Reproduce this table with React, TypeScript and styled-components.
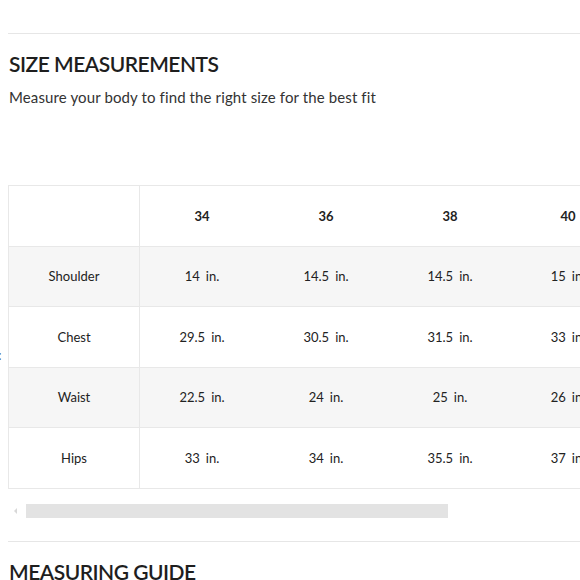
import React from "react";
import styled, { createGlobalStyle } from "styled-components";

const Global = createGlobalStyle`
  html, body { margin: 0; padding: 0; background: #fff; }
  body { font-family: "Lato", "Noto Sans", sans-serif; color: #222; overflow: hidden; }
`;

const Page = styled.div`
  width: 580px;
  height: 580px;
  overflow: hidden;
  position: relative;
  padding: 33px 0 0 8px;
  box-sizing: border-box;
`;

const Divider = styled.div`
  height: 1px;
  background: #e6e6e6;
  margin-right: -8px;
`;

const Heading = styled.h2`
  margin: 17px 0 0 1px;
  font-size: 21px;
  line-height: 26px;
  font-weight: 600;
  color: #1e1e1e;
  letter-spacing: -0.5px;
`;

const Sub = styled.p`
  margin: 10px 0 0 1px;
  font-size: 15px;
  line-height: 20px;
  color: #333;
  letter-spacing: 0.12px;
`;

const TableWrap = styled.div`
  margin-top: 78px;
  width: 640px;
`;

const Table = styled.table`
  border-collapse: collapse;
  table-layout: fixed;
  font-size: 13px;
  color: #222;
  border: 1px solid #e8e8e8;
`;

const Row = styled.tr<{ $shade?: boolean }>`
  background: ${(p) => (p.$shade ? "#f6f6f6" : "#fff")};
  height: 60.5px;
  border-top: 1px solid #e8e8e8;
`;

const Cell = styled.td<{ $w?: number; $head?: boolean; $first?: boolean }>`
  width: ${(p) => p.$w ?? 124}px;
  border-right: ${(p) => (p.$first ? "1px solid #e8e8e8" : "none")};
  text-align: center;
  padding: 0;
  font-weight: ${(p) => (p.$head ? 700 : 400)};
  white-space: nowrap;
`;

const Unit = styled.span`
  margin-left: 6px;
`;

const ScrollRow = styled.div`
  display: flex;
  align-items: center;
  height: 14px;
  margin-top: 15px;
  padding-left: 6px;
  gap: 9px;
`;

const Arrow = styled.span`
  width: 0;
  height: 0;
  border-top: 3px solid transparent;
  border-bottom: 3px solid transparent;
  border-right: 3px solid #d8d8d8;
`;

const Thumb = styled.div`
  width: 422px;
  height: 14px;
  background: #e3e3e3;
`;

const Divider2 = styled(Divider)`
  margin-top: 23px;
`;

const Heading2 = styled(Heading)`
  margin-top: 17px;
`;

const Colon = styled.span`
  position: absolute;
  left: -2px;
  top: 346px;
  font-size: 14px;
  color: #444;
`;

const sizes = ["34", "36", "38", "40"];
const rows: { label: string; vals: string[] }[] = [
  { label: "Shoulder", vals: ["14", "14.5", "14.5", "15"] },
  { label: "Chest", vals: ["29.5", "30.5", "31.5", "33"] },
  { label: "Waist", vals: ["22.5", "24", "25", "26"] },
  { label: "Hips", vals: ["33", "34", "35.5", "37"] },
];

const widths = [124, 124, 124, 112];

export default function App() {
  return (
    <Page>
      <Global />
      <Colon>:</Colon>
      <Divider />
      <Heading>SIZE MEASUREMENTS</Heading>
      <Sub>Measure your body to find the right size for the best fit</Sub>
      <TableWrap>
        <Table>
          <tbody>
            <Row>
              <Cell $w={130} $first />
              {sizes.map((s, j) => (
                <Cell key={s} $w={widths[j]} $head>
                  {s}
                </Cell>
              ))}
            </Row>
            {rows.map((r, i) => (
              <Row key={r.label} $shade={i % 2 === 0}>
                <Cell $w={130} $first>
                  {r.label}
                </Cell>
                {r.vals.map((v, j) => (
                  <Cell key={j} $w={widths[j]}>
                    {v}
                    <Unit>in.</Unit>
                  </Cell>
                ))}
              </Row>
            ))}
          </tbody>
        </Table>
      </TableWrap>
      <ScrollRow>
        <Arrow />
        <Thumb />
      </ScrollRow>
      <Divider2 />
      <Heading2>MEASURING GUIDE</Heading2>
    </Page>
  );
}
